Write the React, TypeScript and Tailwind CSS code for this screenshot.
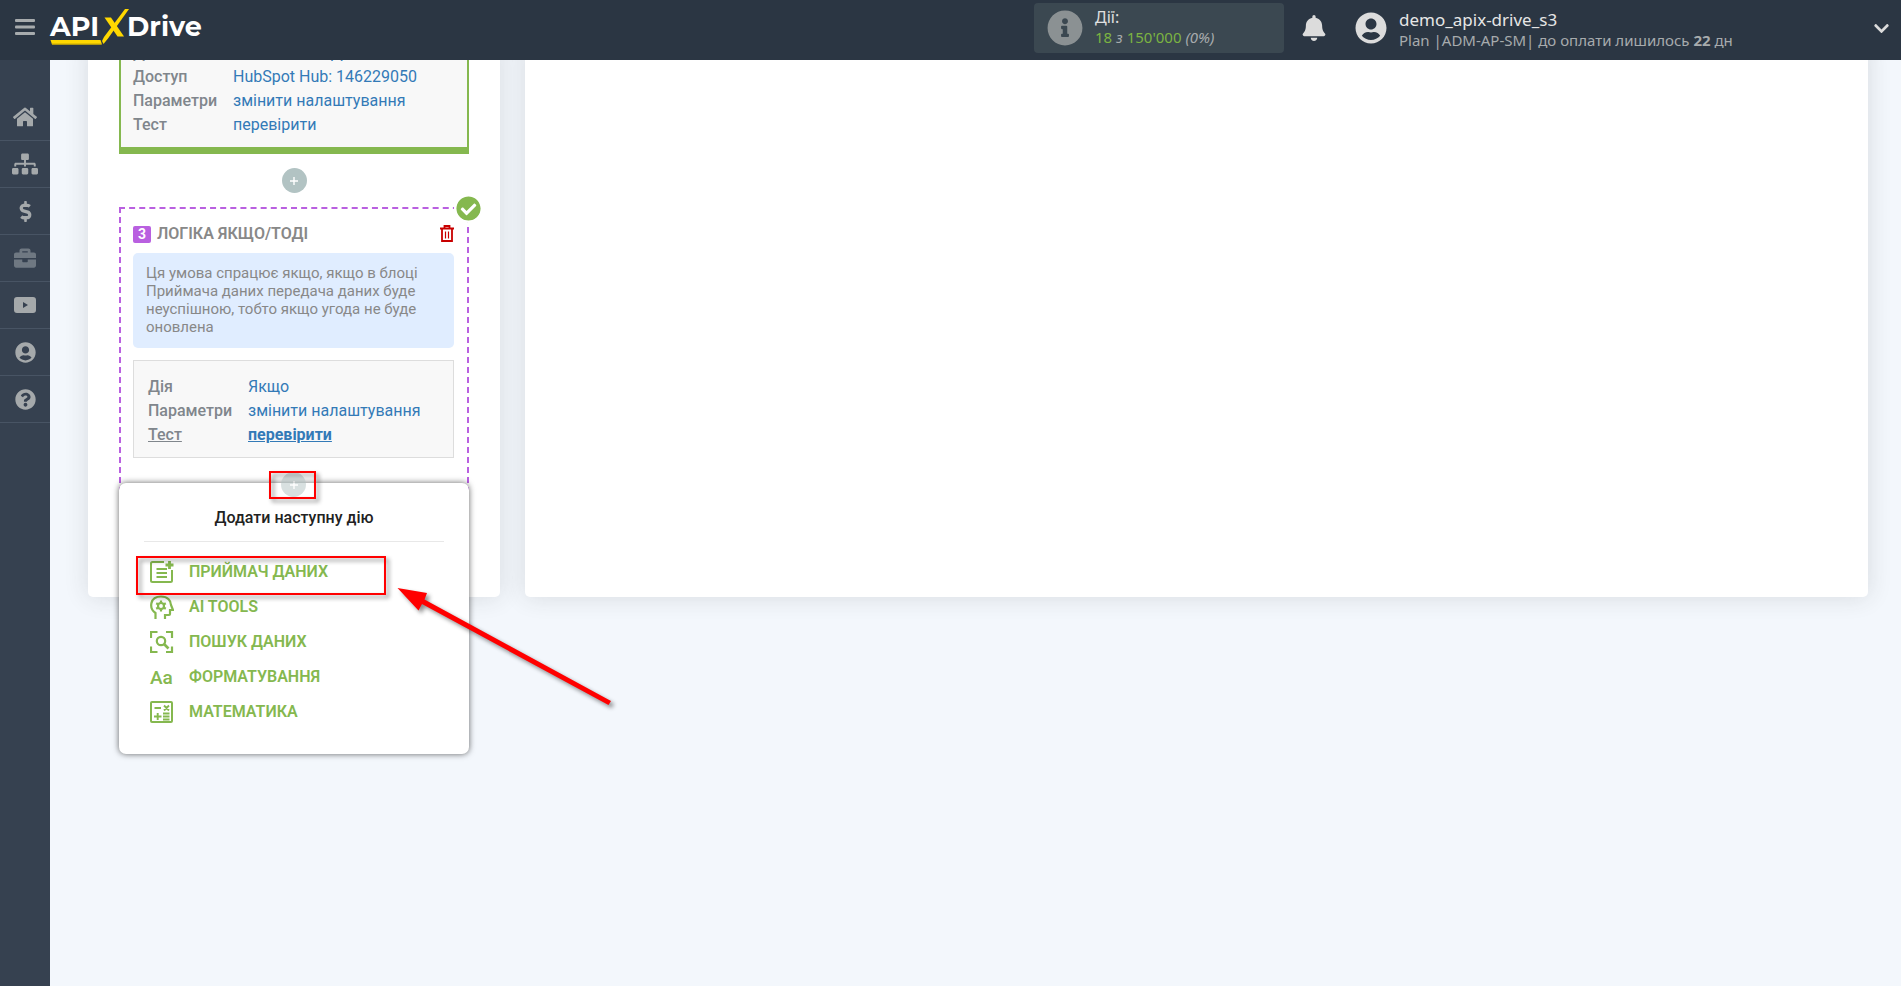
import React from "react";
import {
  FaBell,
  FaBriefcase,
  FaCheckCircle,
  FaChevronDown,
  FaDollarSign,
  FaHome,
  FaInfoCircle,
  FaQuestionCircle,
  FaSitemap,
  FaUserCircle,
} from "react-icons/fa";

type IconType = React.ComponentType<{ className?: string }>;

const navItems: { label: string; icon: IconType; size: string; dim?: boolean }[] = [
  { label: "Головна", icon: FaHome, size: "size-6" },
  { label: "Зв'язки", icon: FaSitemap, size: "size-[26px]" },
  { label: "Оплата", icon: FaDollarSign, size: "size-[21px]" },
  { label: "Портфель", icon: FaBriefcase, size: "size-[22px]", dim: true },
  { label: "Відео", icon: VideoIcon, size: "size-6" },
  { label: "Профіль", icon: FaUserCircle, size: "size-[21px]" },
  { label: "Довідка", icon: FaQuestionCircle, size: "size-[21px]" },
];

function VideoIcon({ className }: { className?: string }) {
  return (
    <svg viewBox="0 0 24 24" className={className} fill="currentColor" aria-hidden="true">
      <path fillRule="evenodd" d="M4 4h16q3 0 3 3v10q0 3-3 3H4q-3 0-3-3V7q0-3 3-3zM10 9v6l5-3z" />
    </svg>
  );
}

function Logo() {
  return (
    <a
      href="#"
      aria-label="APIXDrive"
      className="relative flex h-[60px] items-center pb-1.5 font-[Montserrat,Inter,sans-serif] text-[27px] leading-[30px] font-bold text-white"
    >
      <span>API</span>
      <svg viewBox="0 0 80 60" className="absolute top-0 left-0 h-[60px] w-20" fill="#ffd800" aria-hidden="true">
        <path d="M.5 40h50l1.500 4.500H2z" />
        <path d="M2 43.500h49v1H2z" fill="#c9a800" />
        <path d="M75 9h4L58 38.500 53.500 44 52 41l2-4z" />
        <path d="M54.500 17.500H61l13 19h-6.500z" />
      </svg>
      <span className="ml-7">Drive</span>
    </a>
  );
}

function Header() {
  return (
    <header className="relative z-20 flex h-[60px] shrink-0 items-center bg-[#2b3643] font-['Noto_Sans',sans-serif]">
      <button aria-label="Меню" className="mb-1.5 flex w-[50px] justify-center text-[#a7abad]">
        <svg viewBox="0 0 20 17" className="h-[17px] w-5" fill="currentColor" aria-hidden="true">
          <rect width="20" height="3" rx="1" />
          <rect y="6.500" width="20" height="3" rx="1" />
          <rect y="13" width="20" height="3" rx="1" />
        </svg>
      </button>
      <Logo />
      <div className="mb-1 ml-auto flex h-[50px] w-[250px] items-center gap-3 rounded bg-[#3b4851] pl-[13px]">
        <FaInfoCircle className="size-9 text-[#8b9193]" />
        <div className="pb-0.5 text-[15px] leading-5">
          <div className="text-base leading-5 text-[#e0e0e0]">Дії:</div>
          <div className="text-[#7cb342]">
            18 <i className="text-[#a7abad]">з</i> 150'000 <i className="text-[#a7abad]">(0%)</i>
          </div>
        </div>
      </div>
      <button aria-label="Сповіщення" className="mb-1 ml-[17px] text-[#dcdcdc]">
        <FaBell className="size-[26px]" />
      </button>
      <div className="mb-1 ml-7 flex items-center gap-3">
        <FaUserCircle className="size-8 text-[#dcdcdc]" />
        <div className="w-[474px] pt-1">
          <div className="text-[17px] leading-5 text-[#e6e6e6]">demo_apix-drive_s3</div>
          <div className="text-[15px] leading-5 text-[#a7abad]">
            Plan |ADM-AP-SM| до оплати лишилось <b>22</b> дн
          </div>
        </div>
      </div>
      <button aria-label="Розгорнути" className="mr-[11px] mb-1 w-[17px] text-[#dcdcdc]">
        <FaChevronDown className="size-[17px]" />
      </button>
    </header>
  );
}

function Sidebar() {
  return (
    <nav className="w-[50px] shrink-0 bg-[#364150] pt-[34px]">
      {navItems.map(({ label, icon: Icon, size, dim }) => (
        <a
          key={label}
          href="#"
          aria-label={label}
          className={`flex h-[47px] items-center justify-center border-b border-[#485464] ${dim ? "text-[#6f7882]" : "text-[#a5a9ab]"}`}
        >
          <Icon className={size} />
        </a>
      ))}
    </nav>
  );
}

function Row({ label, value, strong }: { label: string; value: string; strong?: boolean }) {
  return (
    <div className="flex">
      <dt className={`w-[100px] font-medium text-[#80868c] ${strong ? "underline" : ""}`}>{label}</dt>
      <dd>
        <a href="#" className={`text-[#337ab7] ${strong ? "font-bold underline" : ""}`}>
          {value}
        </a>
      </dd>
    </div>
  );
}

function PlusButton({ className = "" }: { className?: string }) {
  return (
    <button aria-label="Додати" className={`flex size-[25px] items-center justify-center rounded-full bg-[#b2c3c3] ${className}`}>
      <svg viewBox="0 0 8 8" className="size-2" aria-hidden="true">
        <path d="M4 0v8M0 4h8" stroke="#fff" strokeWidth="1.4" />
      </svg>
    </button>
  );
}

function TrashIcon() {
  return (
    <svg viewBox="0 0 14 17" className="h-[17px] w-3.5" fill="none" stroke="#c80000" strokeWidth="1.800" aria-hidden="true">
      <path d="M0 3.500h14M2 4v12h10V4M4.500 3V1h5v2" />
      <path d="M5.500 6.500v7M8.500 6.500v7" strokeWidth="1.200" />
    </svg>
  );
}

function ReceiverIcon() {
  return (
    <svg viewBox="0 0 24 24" className="size-6" fill="none" stroke="currentColor" strokeWidth="2" aria-hidden="true">
      <path d="M14 2H2.500Q1 2 1 3.500v17Q1 22 2.500 22h18q1.500 0 1.500-1.500V10" />
      <path d="M6.500 9H17M6.500 13H17M6.500 17H17" strokeWidth="2.200" />
      <path d="M19.500 1v8M15.500 5h8" strokeWidth="2.800" />
    </svg>
  );
}

function AiIcon() {
  return (
    <svg viewBox="0 0 24 24" className="size-6" fill="none" stroke="currentColor" strokeWidth="2.200" aria-hidden="true">
      <path d="M5.500 24v-6C-1.500 13 0 1.500 11 1.500c7 0 10 4.500 10 8.500l2 5h-3v4q0 1-1 1h-4v4" />
      <circle cx="11" cy="11" r="3" />
      <path d="M11 5.500v2M11 14.500v2M6.200 8.300l1.800 1M14 12.700l1.800 1M6.200 13.700l1.800-1M14 9.300l1.800-1" />
    </svg>
  );
}

function SearchIcon() {
  return (
    <svg viewBox="0 0 24 24" className="size-6" fill="none" stroke="currentColor" strokeWidth="2.200" aria-hidden="true">
      <path d="M1 8V2h6.500M16 2h6v6M22 16.500V22h-6M7.500 22H1v-5.500" />
      <circle cx="11" cy="11" r="4.200" />
      <path d="M14 14l4.500 4.500" strokeWidth="2.600" />
    </svg>
  );
}

function FormatIcon() {
  return (
    <span className="block w-6 pt-0.5 text-[19px] leading-6 font-medium" aria-hidden="true">
      Aa
    </span>
  );
}

function MathIcon() {
  return (
    <svg viewBox="0 0 24 24" className="size-6" fill="none" stroke="currentColor" strokeWidth="2" aria-hidden="true">
      <rect x="1" y="2" width="21" height="20" rx="1" />
      <path d="M4.500 8h6.500M14 5.500l5 5M19 5.500l-5 5M4 16.500h7.500M7.700 13v7M13 13.500h6.500M13 16.500h6.500M13 19.500h6.500" strokeWidth="1.900" />
    </svg>
  );
}

const menuItems: { label: string; icon: IconType }[] = [
  { label: "ПРИЙМАЧ ДАНИХ", icon: ReceiverIcon },
  { label: "AI TOOLS", icon: AiIcon },
  { label: "ПОШУК ДАНИХ", icon: SearchIcon },
  { label: "ФОРМАТУВАННЯ", icon: FormatIcon },
  { label: "МАТЕМАТИКА", icon: MathIcon },
];

function Frame({ className }: { className: string }) {
  return <div className={`pointer-events-none absolute border-2 border-[#f00] drop-shadow-[3px_3px_2px_rgba(0,0,0,0.45)] ${className}`} />;
}

function ActionMenu() {
  return (
    <div className="absolute -inset-x-0.5 top-[274px] z-10 h-[271px] rounded-[7px] bg-white px-[25px] shadow-[0_0_6px_rgba(0,0,0,0.6)]">
      <PlusButton className="absolute -top-[11px] left-[162px] opacity-50" />
      <h2 className="border-b border-[#e8e8e8] pt-[23px] pb-[11px] text-center text-base leading-6 font-medium text-[#222]">
        Додати наступну дію
      </h2>
      <ul className="pt-3">
        {menuItems.map(({ label, icon: Icon }) => (
          <li key={label}>
            <a href="#" className="flex h-[35px] items-center gap-[15px] pl-1.5 text-base font-semibold text-[#85b84f]">
              <Icon />
              {label}
            </a>
          </li>
        ))}
      </ul>
      <Frame className="-top-3 left-[150px] h-7 w-[47px]" />
      <Frame className="top-[73px] left-[17px] h-[39px] w-[250px]" />
      <svg
        viewBox="0 0 220 124"
        className="pointer-events-none absolute top-[103px] left-[277px] h-[124px] w-[220px] drop-shadow-[3px_3px_2px_rgba(0,0,0,0.45)]"
        fill="#f00"
        aria-hidden="true"
      >
        <path d="M1.500 2L31 7l-2.500 6.500L215 115l-2.500 4L26 18l-3.500 6.500z" />
      </svg>
    </div>
  );
}

function LogicBlock() {
  return (
    <section className="relative mt-3.5 border-2 border-dashed border-[#b960e0] pt-[13px] pr-[13px] pb-[103px] pl-3">
      <FaCheckCircle className="absolute -top-[13px] -right-3.5 size-[25px] rounded-full bg-white text-[#85b84f] ring-2 ring-white" />
      <div className="flex h-6 items-center">
        <span className="flex h-[17px] w-[18px] items-center justify-center rounded-xs bg-[#b960e0] text-sm font-bold text-white">3</span>
        <h2 className="ml-1.5 text-base font-semibold text-[#888]">ЛОГІКА ЯКЩО/ТОДІ</h2>
        <button aria-label="Видалити" className="ml-auto pb-0.5">
          <TrashIcon />
        </button>
      </div>
      <p className="mt-[7px] h-[95px] rounded-[5px] bg-[#e0edff] px-[13px] py-[11px] text-[15px] leading-[18px] text-[#888]">
        Ця умова спрацює якщо, якщо в блоці Приймача даних передача даних буде неуспішною, тобто якщо угода не буде оновлена
      </p>
      <dl className="mt-3 border border-[#ddd] bg-[#f8f8f8] px-3.5 pt-3.5 pb-2.5 text-base leading-6">
        <Row label="Дія" value="Якщо" />
        <Row label="Параметри" value="змінити налаштування" />
        <Row label="Тест" value="перевірити" strong />
      </dl>
      <ActionMenu />
    </section>
  );
}

export default function App() {
  return (
    <div className="flex h-screen flex-col overflow-hidden bg-[#f3f7fc] font-[Roboto,sans-serif]">
      <Header />
      <div className="flex min-h-0 flex-1">
        <Sidebar />
        <main className="-mt-[19px] flex flex-1 gap-[25px] self-start pr-[33px] pl-[38px]">
          <section className="w-[412px] shrink-0 rounded-[5px] bg-white px-[31px] pb-[34px] shadow-[0_0_25px_rgba(50,50,50,0.14)]">
            <dl className="border-x-2 border-b-[7px] border-[#85b84f] bg-[#f8f8f8] px-3 pb-2.5 text-base leading-6">
              <Row label="Дія" value="Оновити УГОДУ" />
              <Row label="Доступ" value="HubSpot Hub: 146229050" />
              <Row label="Параметри" value="змінити налаштування" />
              <Row label="Тест" value="перевірити" />
            </dl>
            <PlusButton className="mx-auto mt-3.5" />
            <LogicBlock />
          </section>
          <section aria-label="Налаштування" className="flex-1 rounded-[5px] bg-white shadow-[0_0_25px_rgba(50,50,50,0.14)]" />
        </main>
      </div>
    </div>
  );
}
